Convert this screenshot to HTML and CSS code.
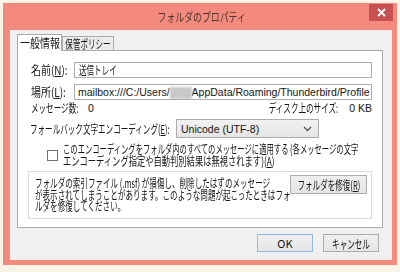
FILE: index.html
```html
<!DOCTYPE html>
<html lang="ja">
<head>
	<meta charset="UTF-8">
	<title>フォルダのプロパティ</title>
	<link rel="stylesheet" href="styles.css">
</head>
<body>
	<!-- ダイアログ -->
	<div class="window">
		<div class="titlebar">
			<span></span>
			<span class="title jp c">フォルダのプロパティ</span>
			<span class="close">
				<svg width="9" height="9" viewBox="0 0 9 9"><path d="M1 1L8 8M8 1L1 8" stroke="#fff" stroke-width="1.8"/></svg>
			</span>
		</div>

		<div class="client">
			<!-- タブ -->
			<div class="tabs">
				<div class="tab active"><span class="jp c k">一般情報</span></div>
				<div class="tab"><span class="jp c">保管ポリシー</span></div>
			</div>

			<div class="panel">
				<div class="field">
					<label><span class="jp k">名前(<u>N</u>):</span></label>
					<div class="input"><span class="jp">送信トレイ</span></div>
				</div>
				<div class="field">
					<label><span class="jp k">場所(<u>L</u>):</span></label>
					<div class="input latin">mailbox:///C:/Users/<span class="blur"></span>AppData/Roaming/Thunderbird/Profile</div>
				</div>

				<div class="stats">
					<span class="jp count">メッセージ数:</span><span class="latin">0</span>
					<span class="jp r size">ディスク上のサイズ:</span><span class="latin">0 KB</span>
				</div>

				<div class="encoding">
					<label><span class="jp">フォールバック文字エンコーディング(<u>E</u>):</span></label>
					<div class="select">
						<span class="latin">Unicode (UTF-8)</span>
						<svg width="9" height="6" viewBox="0 0 9 6"><path d="M1 1L4.5 4.5L8 1" fill="none" stroke="#555" stroke-width="1.3"/></svg>
					</div>
				</div>

				<div class="check">
					<span class="box"></span>
					<p><span class="jp n">このエンコーディングをフォルダ内のすべてのメッセージに適用する (各メッセージの文字</span><br><span class="jp m">エンコーディング指定や自動判別結果は無視されます)(<u>A</u>)</span></p>
				</div>

				<!-- 修復 -->
				<div class="repair">
					<p><span class="jp">フォルダの索引ファイル (.msf) が損傷し、削除したはずのメッセージ</span><br><span class="jp">が表示されてしまうことがあります。このような問題が起こったときはフォ</span><br><span class="jp">ルダを修復してください。</span></p>
					<button class="btn"><span class="jp c">フォルダを修復(<u>R</u>)</span></button>
				</div>
			</div>

			<div class="actions">
				<button class="btn btn-ok latin">OK</button>
				<button class="btn"><span class="jp c">キャンセル</span></button>
			</div>
		</div>
	</div>
</body>
</html>
```

FILE: styles.css
```css
*{margin:0;padding:0;box-sizing:border-box;}
body{background:#fbf4e6;font-family:"Noto Sans CJK JP","Noto Sans",sans-serif;font-size:12px;color:#141414;white-space:nowrap;}
u{text-decoration:underline;text-underline-offset:1px;}
.latin{font-family:"Liberation Sans","Noto Sans CJK JP",sans-serif;font-size:10.5px;}

/*かなの幅を詰める*/
.jp{display:inline-block;transform:scaleX(.63);transform-origin:0 50%;}
.jp.n{transform:scaleX(.61);}
.jp.m{transform:scaleX(.69);}
.jp.k{transform:scaleX(.83);}
.jp.c{transform-origin:50% 50%;}
.jp.r{transform-origin:100% 50%;}

/*ウィンドウ枠*/
.window{margin:3px 3px 0 3px;height:262px;background:#f38a7d;display:flex;flex-direction:column;padding:0 5px 5px 7px;overflow:hidden;}
.titlebar{height:27px;display:grid;grid-template-columns:1fr auto 1fr;align-items:start;margin:0 -1px 0 0;}
.title{font-size:12px;color:#4e3531;line-height:27px;transform:scaleX(.74);}
.close{justify-self:end;width:24px;height:17px;margin-top:1px;background:#c75050;display:flex;align-items:center;justify-content:center;}
.client{flex:1;background:#f0f0f0;padding:4px 9px 0 7px;display:flex;flex-direction:column;}

/*タブ*/
.tabs{display:flex;align-items:flex-end;height:16px;position:relative;z-index:1;}
.tab{width:52px;height:14px;border:1px solid #acacac;border-bottom:none;background:#ececec;line-height:13px;display:flex;justify-content:center;}
.tab.active{width:45px;height:17px;background:#fff;margin-bottom:-1px;line-height:16px;}
.panel{height:178px;background:#fff;border:1px solid #acacac;padding:10px 10px 0 10px;overflow:hidden;}

/*入力欄*/
.field{display:flex;align-items:center;}
.field + .field{margin-top:5px;}
.field label{width:46px;flex:none;padding-left:3px;}
.input{flex:1;height:16px;border:1px solid #acacac;padding:0 4px;line-height:14px;overflow:hidden;}
.input.latin{padding-left:3px;}
.blur{display:inline-block;width:22px;height:12px;background:#c9c9c9;filter:blur(1px);vertical-align:middle;}
.stats{display:flex;align-items:center;padding:0 0 0 3px;height:14px;line-height:14px;margin-top:1px;}
.stats .count{width:57px;}
.stats .size{margin-left:auto;margin-right:11px;}

.encoding{display:flex;align-items:center;margin-top:4px;padding-left:2px;}
.encoding label{width:146px;flex:none;}
.select{width:143px;height:19px;border:1px solid #acacac;background:linear-gradient(#f2f2f2,#e5e5e5);display:flex;align-items:center;justify-content:space-between;padding:0 6px 0 4px;}

.check{display:flex;align-items:center;margin-top:5px;padding-left:19px;}
.box{width:11px;height:11px;border:1px solid #707070;background:#fff;margin-right:5px;flex:none;}
.check p{line-height:12px;}

.repair{margin-top:4px;border:1px solid #dcdcdc;height:48px;display:flex;align-items:flex-start;padding:3px 5px 0 6px;}
.repair p{width:249px;flex:none;line-height:11.5px;margin-top:2px;}
.repair .btn{margin-left:6px;width:77px;}

/*ボタン*/
.btn{font:inherit;height:19px;border:1px solid #acacac;background:linear-gradient(#f0f0f0,#e5e5e5);color:#141414;display:flex;align-items:center;justify-content:center;overflow:visible;}
.actions{display:flex;justify-content:flex-end;gap:10px;margin-top:6px;padding-right:4px;}
.actions .btn{width:56px;height:18px;}
.btn-ok{border-color:#8ebde9;font-size:11px;}
```
